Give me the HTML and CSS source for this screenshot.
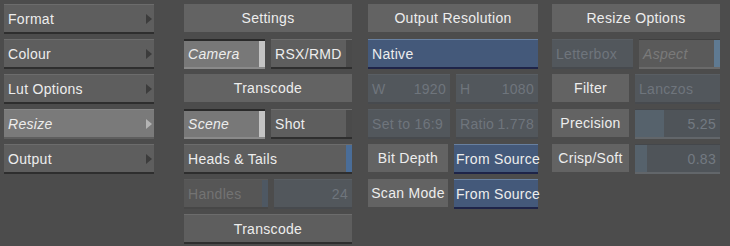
FILE: index.html
```html
<!DOCTYPE html>
<html lang="en">
<head>
  <meta charset="UTF-8" />
  <title>Resize</title>
  <link rel="stylesheet" href="styles.css">
</head>
<body>
  <div class="panel">
    <div class="col menu">
      <button class="btn arrow">Format</button>
      <button class="btn arrow">Colour</button>
      <button class="btn arrow">Lut Options</button>
      <button class="btn arrow active">Resize</button>
      <button class="btn arrow">Output</button>
    </div>

    <div class="col settings">
      <div class="label">Settings</div>
      <div class="row">
        <button class="btn toggle on">Camera</button>
        <button class="btn toggle">RSX/RMD</button>
      </div>
      <div class="label">Transcode</div>
      <div class="row">
        <button class="btn toggle on">Scene</button>
        <button class="btn toggle">Shot</button>
      </div>
      <button class="btn toggle blue-bar">Heads &amp; Tails</button>
      <div class="row">
        <button class="btn toggle dim">Handles</button>
        <div class="field dim num">24</div>
      </div>
      <button class="btn center">Transcode</button>
    </div>

    <div class="col output">
      <div class="label">Output Resolution</div>
      <button class="btn blue">Native</button>
      <div class="row">
        <div class="field dim split"><span>W</span><span>1920</span></div>
        <div class="field dim split"><span>H</span><span>1080</span></div>
      </div>
      <div class="row">
        <div class="field dim">Set to 16:9</div>
        <div class="field dim split"><span>Ratio</span><span>1.778</span></div>
      </div>
      <div class="row">
        <div class="label">Bit Depth</div>
        <button class="btn blue tight">From Source</button>
      </div>
      <div class="row">
        <div class="label">Scan Mode</div>
        <button class="btn blue tight">From Source</button>
      </div>
    </div>

    <div class="col options">
      <div class="label">Resize Options</div>
      <div class="row">
        <div class="field dim">Letterbox</div>
        <div class="field gray aspect">Aspect</div>
      </div>
      <div class="row">
        <div class="label">Filter</div>
        <div class="field dim">Lanczos</div>
      </div>
      <div class="row">
        <div class="label">Precision</div>
        <div class="slider"><div class="fill" style="width: 29px"></div><span>5.25</span></div>
      </div>
      <div class="row">
        <div class="label">Crisp/Soft</div>
        <div class="slider"><div class="fill" style="width: 12px"></div><span>0.83</span></div>
      </div>
    </div>
  </div>
</body>
</html>
```

FILE: styles.css
```css
body {
  margin: 0;
  background: #4c4c4c;
  font-family: 'Liberation Sans', Arial, sans-serif;
  font-size: 14px;
  letter-spacing: 0.3px;
  color: #ededed;
  width: 730px;
  height: 246px;
  overflow: hidden;
}
.panel {
  display: flex;
  padding: 4px 0 0 4px;
}
.col {
  display: flex;
  flex-direction: column;
  gap: 5px;
}
.menu { width: 150px; margin-right: 30px; }
.settings { width: 168px; margin-right: 16px; }
.output { width: 170px; margin-right: 14px; }
.options { width: 168px; }

.row {
  display: flex;
  gap: 6px;
}
.row > * {
  flex: 1;
  min-width: 0;
}

.btn, .label, .field, .slider {
  box-sizing: border-box;
  height: 30px;
  font: inherit;
  letter-spacing: inherit;
  color: inherit;
  text-align: left;
  white-space: nowrap;
}

.btn {
  display: flex;
  align-items: center;
  padding: 0 4px;
  border: 0;
  border-top: 1px solid #6c6c6c;
  border-bottom: 2px solid #2e2e2e;
  background: #5e5e5e;
  position: relative;
}
.btn.arrow::after {
  content: '';
  position: absolute;
  right: 2px;
  top: 9px;
  border-left: 6px solid #3c3c3c;
  border-top: 5px solid transparent;
  border-bottom: 5px solid transparent;
}
.btn.active {
  background: #7a7a7a;
  border-top-color: #858585;
  border-bottom-color: #5e5e5e;
  font-style: italic;
}
.btn.active::after {
  border-left-color: #b4b4b4;
}
.btn.center {
  justify-content: center;
}

.label {
  display: flex;
  align-items: center;
  justify-content: center;
  background: #636363;
  height: 28px;
  margin-bottom: 2px;
}

.toggle {
  padding-right: 10px;
}
.toggle::after {
  content: '';
  position: absolute;
  right: 0;
  top: 0;
  bottom: 0;
  width: 6px;
  background: #4a4a4a;
}
.toggle.on {
  background: #787878;
  border-top: 2px solid #2a2a2a;
  border-bottom: 2px solid #8a8a8a;
  font-style: italic;
}
.toggle.on::after {
  background: #c4c4c4;
}
.toggle.blue-bar::after {
  background: #4a6d98;
}
.toggle.dim {
  background: #565656;
  border-top-color: #5a5a5a;
  border-bottom-color: #474747;
  color: #737373;
}
.toggle.dim::after {
  background: #4e5863;
}

.blue {
  background: #44597a;
  border-top: 1px solid #6880a0;
  border-bottom: 2px solid #1e2448;
}
.blue.tight {
  padding: 0 2px;
}

.field {
  display: flex;
  align-items: center;
  padding: 0 4px;
  background: #52575c;
  border-top: 1px solid #595e63;
  border-bottom: 2px solid #474a4e;
  color: #6f757c;
}
.field.num {
  justify-content: flex-end;
}
.field.split {
  justify-content: space-between;
}
.field.gray {
  background: #5a5a5a;
  border-top: 1px solid #404040;
  border-bottom: 2px solid #6a6a6a;
  color: #7a7a7a;
  font-style: italic;
  position: relative;
}
.field.aspect::after {
  content: '';
  position: absolute;
  right: 0;
  top: 0;
  bottom: 0;
  width: 6px;
  background: #5f7a92;
}

.slider {
  position: relative;
  display: flex;
  align-items: center;
  justify-content: flex-end;
  padding: 0 4px;
  background: #4f5459;
  border-top: 1px solid #44474b;
  border-bottom: 2px solid #62666a;
  color: #737a82;
}
.slider .fill {
  position: absolute;
  left: 0;
  top: 0;
  bottom: 0;
  background: #56626c;
}
.slider span {
  position: relative;
}
```
